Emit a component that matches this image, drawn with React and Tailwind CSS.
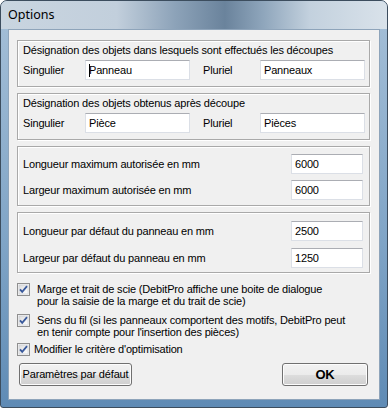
import React from "react";

const F = { fontFamily: '"Liberation Sans", Arial, sans-serif' };

function Input({ value, w, caret }) {
  return (
    <div
      className={`h-[20px] ${w} bg-white border border-[#dbdfe6] border-t-[#abadb3] flex items-center pl-[3px] text-[11px] text-black`}
    >
      {caret && <span className="w-px h-[13px] bg-black mr-[-1px]" />}
      {value}
    </div>
  );
}

function Group({ className, children }) {
  return (
    <div
      className={`border border-[#a9a9a9] shadow-[inset_1px_1px_0_#ffffff,1px_1px_0_#ffffff] ${className}`}
    >
      {children}
    </div>
  );
}

function NameGroup({ title, s, p, caret, className }) {
  return (
    <Group className={`pt-[1px] pb-[6px] pl-[5px] ${className}`}>
      <div className="h-[16px] leading-[16px] text-[11px]">{title}</div>
      <div className="flex items-center mt-[2px]">
        <div className="w-[62px] text-[11px]">Singulier</div>
        <Input value={s} w="w-[105px]" caret={caret} />
        <div className="w-[57px] ml-[13px] text-[11px]">Pluriel</div>
        <Input value={p} w="w-[105px]" />
      </div>
    </Group>
  );
}

function NumRow({ label, value, className }) {
  return (
    <div className={`flex items-center ${className}`}>
      <div className="flex-1 text-[11px]">{label}</div>
      <Input value={value} w="w-[72px]" />
    </div>
  );
}

function Check() {
  return (
    <svg width="13" height="13" viewBox="0 0 13 13" className="shrink-0">
      <defs>
        <linearGradient id="cbg" x1="0" y1="0" x2="1" y2="1">
          <stop offset="0" stopColor="#dcdcdc" />
          <stop offset="1" stopColor="#ffffff" />
        </linearGradient>
      </defs>
      <rect x="0.5" y="0.5" width="12" height="12" fill="#f4f4f4" stroke="#8f8f8f" />
      <rect x="2" y="2" width="9" height="9" fill="url(#cbg)" stroke="#c6cad0" strokeWidth="0.6" />
      <path d="M3 6.3 L5.2 8.8 L10 3.2" fill="none" stroke="#3a5a9c" strokeWidth="1.8" />
    </svg>
  );
}

function CheckRow({ lines, className, textMl = "ml-[7px]" }) {
  return (
    <div className={`flex items-start pl-[9px] ${className}`}>
      <div className="h-[13px] flex items-center">
        <Check />
      </div>
      <div className={`${textMl} text-[11px] leading-[12px]`}>
        {lines.map((l, i) => (
          <div key={i}>{l}</div>
        ))}
      </div>
    </div>
  );
}

export default function App() {
  return (
    <div
      style={F}
      className="w-[388px] h-[408px] relative rounded-t-[7px] rounded-b-[3px] border border-[#3c4d5e] bg-[linear-gradient(to_bottom,#a6c0d8,#7fa4c6_60%,#5f8bb5)] overflow-hidden text-black tracking-[-0.17px]"
    >
      <div className="h-[28px] bg-[linear-gradient(to_right,#c9d5e0_0%,#c2cfdc_30%,#8da3b9_45%,#6a839c_58%,#8fa6bc_68%,#c3d1de_80%,#d9e2ea_100%)] flex items-center pl-[7px]">
        <span className="text-[12.5px] text-black tracking-normal" style={{ fontFamily: '"Noto Sans", "Open Sans", sans-serif' }}>
          Options
        </span>
      </div>
      <div className="mx-[7px] h-[371px] bg-[#f0f0f0] border border-[#8ea4ba] flex flex-col pl-[8px] pr-[9px] pt-[10px]">
        <NameGroup
          title="Désignation des objets dans lesquels sont effectués les découpes"
          s="Panneau"
          p="Panneaux"
          caret
        />
        <NameGroup
          title="Désignation des objets obtenus après découpe"
          s="Pièce"
          p="Pièces"
          className="mt-[6px]"
        />
        <Group className="mt-[6px] pt-[7px] pb-[5px] pl-[5px] pr-[6px]">
          <NumRow label="Longueur maximum autorisée en mm" value="6000" />
          <NumRow label="Largeur maximum autorisée en mm" value="6000" className="mt-[6px]" />
        </Group>
        <Group className="mt-[6px] pt-[8px] pb-[4px] pl-[5px] pr-[6px]">
          <NumRow label="Longueur par défaut du panneau en mm" value="2500" />
          <NumRow label="Largeur par défaut du panneau en mm" value="1250" className="mt-[7px]" />
        </Group>
        <div className="-ml-[9px]">
          <CheckRow
            className="mt-[10px]"
            lines={[
              "Marge et trait de scie (DebitPro affiche une boite de dialogue",
              "pour la saisie de la marge et du trait de scie)",
            ]}
          />
          <CheckRow
            className="mt-[7px]"
            lines={[
              "Sens du fil (si les panneaux comportent des motifs, DebitPro peut",
              "en tenir compte pour l'insertion des pièces)",
            ]}
          />
          <CheckRow className="mt-[5px]" textMl="ml-[4px]" lines={["Modifier le critère d'optimisation"]} />
        </div>
        <div className="flex justify-between mt-[7px] pl-[2px] pr-[2px]">
          <button className="h-[23px] w-[113px] rounded-[3px] border border-[#707070] bg-[linear-gradient(to_bottom,#f2f2f2_0%,#ebebeb_50%,#dddddd_50%,#cfcfcf_100%)] shadow-[inset_0_0_0_1px_#fcfcfc] text-[11px] text-black tracking-[-0.17px]" style={F}>
            Paramètres par défaut
          </button>
          <button className="h-[23px] w-[86px] rounded-[3px] border border-[#707070] bg-[linear-gradient(to_bottom,#f2f2f2_0%,#ebebeb_50%,#dddddd_50%,#cfcfcf_100%)] shadow-[inset_0_0_0_1px_#fcfcfc] text-[13px] font-bold text-black" style={F}>
            OK
          </button>
        </div>
      </div>
    </div>
  );
}
